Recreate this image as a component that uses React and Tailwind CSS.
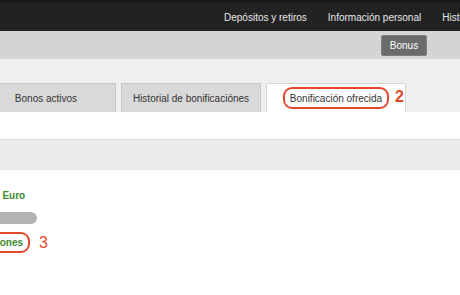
export default function App() {
  const tabs = [
    { t: 'Bonos activos', active: false },
    { t: 'Historial de bonificaciónes', active: false },
    { t: 'Bonificación ofrecida', active: true },
  ]

  return (
    <div className="w-[460px] h-[295px] overflow-hidden bg-white font-['Liberation_Sans',Arial,sans-serif]">
      {/* Top nav */}
      <div className="h-[31px] bg-[#222222] border-t-[3px] border-[#1a1a1a] overflow-hidden">
        <div className="flex items-center h-full ml-[224px] gap-[21px] text-[10px] text-[#e8e8e8] whitespace-nowrap">
          <span>Depósitos y retiros</span>
          <span>Información personal</span>
          <span>Historial de juego</span>
        </div>
      </div>

      {/* Sub bar */}
      <div className="h-[28px] bg-[#d4d4d4] flex items-center justify-end pr-[33px]">
        <div className="w-[46px] h-[21px] bg-[#6b6b6b] border border-[#7d7d7d] rounded-[2px] flex items-center justify-center text-[10px] text-white">
          Bonus
        </div>
      </div>

      {/* Tabs */}
      <div className="bg-[#efefef] pt-[24px]">
        <div className="flex gap-[5px] -ml-[24px]">
          {tabs.map((tab) => (
            <div
              key={tab.t}
              className={`relative w-[140px] h-[29px] shrink-0 flex items-center justify-center text-[10px] text-[#333] border border-b-0 ${
                tab.active ? 'bg-white border-[#d6d6d6]' : 'bg-[#d9d9d9] border-[#c6c6c6]'
              }`}
            >
              {tab.active ? (
                <>
                  <span className="px-[5px] h-[22px] flex items-center rounded-[9px] border-2 border-[#e4482c]">{tab.t}</span>
                  <span className="absolute left-[128px] top-[5px] text-[16px] font-bold text-[#e4482c] leading-none">2</span>
                </>
              ) : (
                tab.t
              )}
            </div>
          ))}
        </div>
      </div>

      {/* Panel */}
      <div className="h-[28px] bg-white border-b border-[#dcdcdc]" />
      <div className="h-[30px] bg-[#ebebeb] border-b border-[#e4e4e4]" />

      {/* Content */}
      <div className="pt-[20px] flex flex-col items-start text-[10px] font-bold text-[#3c8b2e]">
        <span className="-ml-[12px] leading-[12px] whitespace-nowrap">en Euro</span>
        <div className="mt-[10px] -ml-[40px] w-[77px] h-[12px] rounded-full bg-[#b3b3b3]" />
        <div className="mt-[8px] flex items-center gap-[9px]">
          <span className="-ml-[44px] h-[21px] px-[5px] flex items-center rounded-[9px] border-2 border-[#e4482c] whitespace-nowrap">
            Condiciones
          </span>
          <span className="text-[16px] font-normal text-[#e4482c] leading-none">3</span>
        </div>
      </div>
    </div>
  )
}
